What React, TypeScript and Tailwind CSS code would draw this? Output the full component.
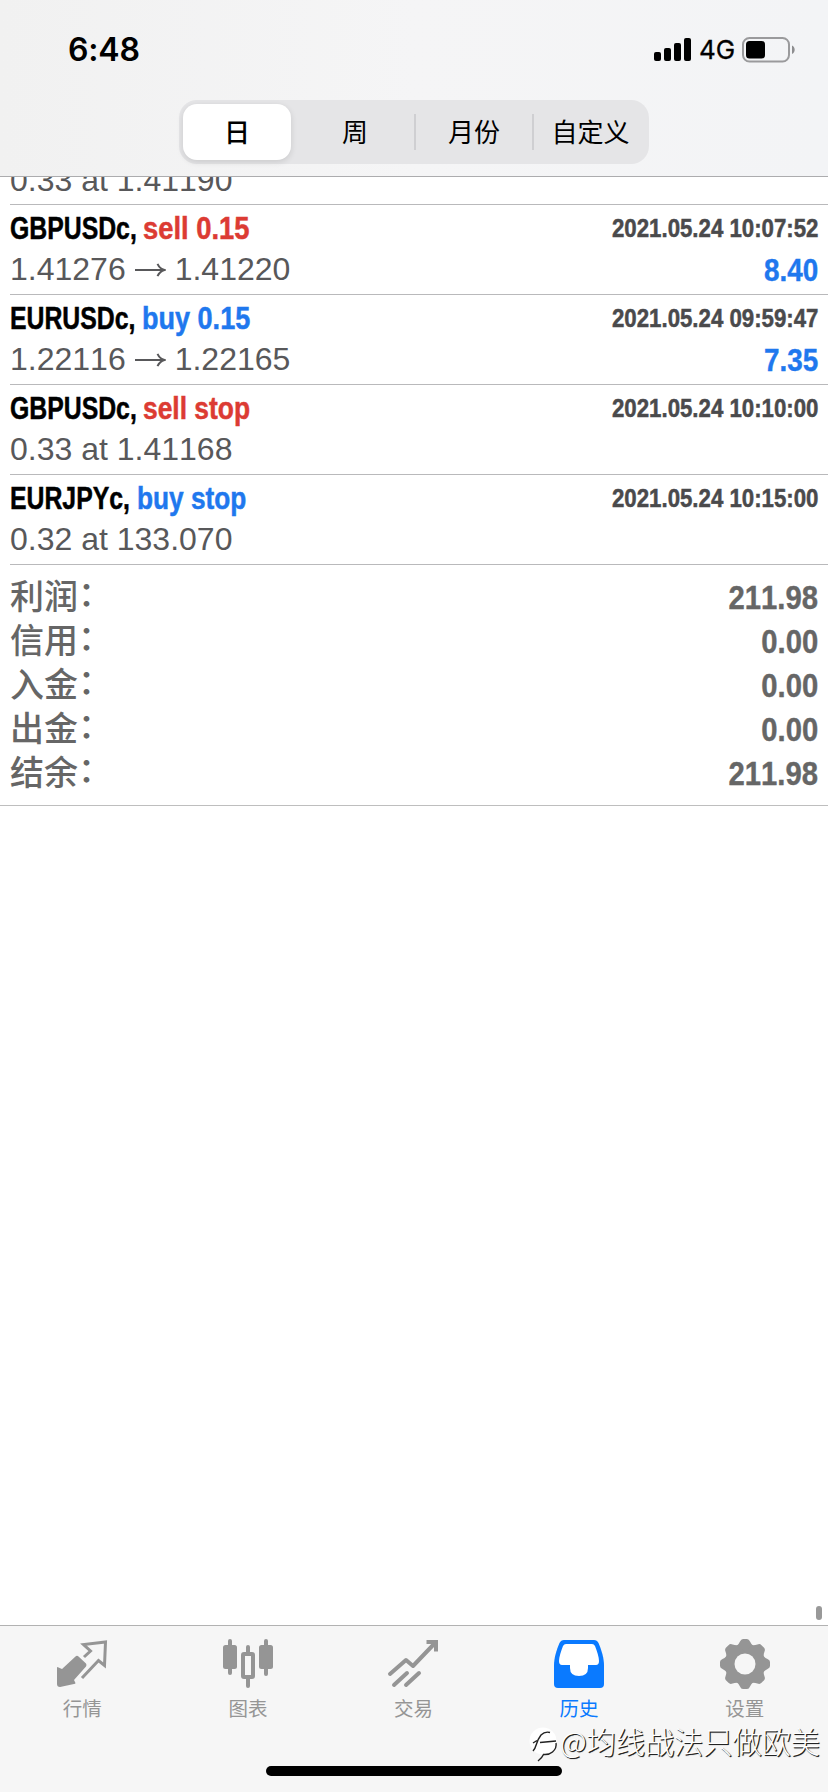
import type { ReactNode } from "react";

const SANS = "font-['Liberation_Sans','Noto_Sans_CJK_SC',sans-serif]";
const CJK = "font-['Noto_Sans_CJK_SC',sans-serif]";

type Deal = {
  symbol: string;
  symbolClass: string;
  action: string;
  actionClass: string;
  from: string;
  to?: string;
  time: string;
  profit?: string;
};

const deals: Deal[] = [
  { symbol: "GBPUSDc,", symbolClass: "scale-x-[0.775] w-[133px]", action: "sell 0.15", actionClass: "text-[#dc3b33] scale-x-[0.855]", from: "1.41276", to: "1.41220", time: "2021.05.24 10:07:52", profit: "8.40" },
  { symbol: "EURUSDc,", symbolClass: "scale-x-[0.775] w-[132px]", action: "buy 0.15", actionClass: "text-[#1f78ee] scale-x-[0.845]", from: "1.22116", to: "1.22165", time: "2021.05.24 09:59:47", profit: "7.35" },
  { symbol: "GBPUSDc,", symbolClass: "scale-x-[0.775] w-[133px]", action: "sell stop", actionClass: "text-[#dc3b33] scale-x-[0.825]", from: "0.33 at 1.41168", time: "2021.05.24 10:10:00" },
  { symbol: "EURJPYc,", symbolClass: "scale-x-[0.775] w-[127px]", action: "buy stop", actionClass: "text-[#1f78ee] scale-x-[0.82]", from: "0.32 at 133.070", time: "2021.05.24 10:15:00" },
];

const totals = [
  ["利润", "211.98"],
  ["信用", "0.00"],
  ["入金", "0.00"],
  ["出金", "0.00"],
  ["结余", "211.98"],
];

function LongArrow() {
  return (
    <svg width="32" height="16" viewBox="0 0 32 16" className="mr-[9px] ml-[8px] mt-[1px] shrink-0" fill="none" stroke="#58585a" strokeWidth="2">
      <path d="M1 8H30M23.5 1.8C25 5 27 7 30.5 8C27 9 25 11 23.5 14.2" />
    </svg>
  );
}

function DealRow({ d }: { d: Deal }) {
  return (
    <div className="ml-[10px] flex h-[90px] flex-col border-b border-[#b9b9bb] pr-[10px]">
      <div className="flex h-[46px] items-center justify-between text-[32px] font-bold leading-[46px] whitespace-nowrap [-webkit-text-stroke:0.5px_currentColor]">
        <div className="flex">
          <span className={`origin-left text-black ${d.symbolClass}`}>{d.symbol}</span>
          <span className={`origin-left ${d.actionClass}`}>{d.action}</span>
        </div>
        <span className="origin-right scale-x-[0.855] text-[26px] text-[#4a4a4c]">{d.time}</span>
      </div>
      <div className="flex h-[36px] items-center justify-between text-[32px] leading-[36px] text-[#58585a] whitespace-nowrap">
        <div className="flex items-center">
          <span>{d.from}</span>
          {d.to && <LongArrow />}
          {d.to && <span>{d.to}</span>}
        </div>
        {d.profit && <span className="mt-[2px] origin-right scale-x-[0.87] font-bold text-[#1f78ee] [-webkit-text-stroke:0.4px_currentColor]">{d.profit}</span>}
      </div>
    </div>
  );
}

function StatusBar() {
  return (
    <div className="flex h-[100px] items-center justify-between pr-[32px] pl-[68px] font-['Inter',sans-serif] text-black">
      <span className="text-[32px] font-semibold leading-none tracking-[-0.2px]">6:48</span>
      <div className="flex items-center">
        <svg width="38" height="24" viewBox="0 0 38 24">
          <rect x="0" y="14" width="7" height="9" rx="2" />
          <rect x="10" y="10" width="7" height="13" rx="2" />
          <rect x="20" y="5" width="7" height="18" rx="2" />
          <rect x="30" y="0" width="7" height="23" rx="2" />
        </svg>
        <span className="ml-[7px] w-[43px] text-[26px] leading-none [-webkit-text-stroke:0.3px_currentColor]">4G</span>
        <svg width="54" height="26" viewBox="0 0 54 26">
          <rect x="1" y="1" width="46" height="23.5" rx="6.5" fill="none" stroke="#9a9a9c" strokeWidth="2" />
          <rect x="4" y="4" width="19" height="17.5" rx="3.5" />
          <path d="M50 8.5C53.6 10 53.6 15.500 50 17Z" fill="#8d8d8f" />
        </svg>
      </div>
    </div>
  );
}

function Segments() {
  return (
    <div className={`ml-[179px] flex h-[64px] w-[470px] items-center rounded-[18px] bg-[#e5e5e7] text-[26px] text-black ${CJK}`}>
      <div className="flex h-full w-[117px] items-center pl-[4px]">
        <div className="flex h-[56px] w-[108px] items-center justify-center rounded-[14px] bg-white pb-[3px] font-medium shadow-[0_2px_6px_rgba(0,0,0,0.12)]">日</div>
      </div>
      <div className="w-[118px] pb-[3px] text-center">周</div>
      <div className="h-[36px] w-[118px] border-l-2 border-[#cfcfd2] text-center leading-[33px]">月份</div>
      <div className="h-[36px] w-[117px] border-l-2 border-[#cfcfd2] pr-[2px] text-center leading-[33px]">自定义</div>
    </div>
  );
}

function Tab({ label, active, children }: { label: string; active?: boolean; children: ReactNode }) {
  return (
    <div className={`flex flex-1 flex-col items-center pt-[12px] pr-[1px] ${active ? "text-[#0a7aff]" : "text-[#959595]"}`}>
      <svg width="52" height="52" viewBox="0 0 52 52">{children}</svg>
      <span className={`mt-[4px] text-[19.500px] leading-[28px] ${CJK}`}>{label}</span>
    </div>
  );
}

const GEAR_TEETH = [0, 45, 90, 135];

export default function App() {
  return (
    <div className={`relative flex h-[1792px] w-[828px] flex-col overflow-hidden bg-white [font-kerning:none] ${SANS}`}>
      <header className="h-[177px] shrink-0 border-b border-[#acacae] bg-linear-to-r from-[#f1f1f1] via-[#f5f5f6] to-[#f3f4f6]">
        <StatusBar />
        <Segments />
      </header>

      <main className="flex min-h-0 flex-1 flex-col overflow-hidden">
        <div className="ml-[10px] flex h-[28px] shrink-0 items-end overflow-hidden border-b border-[#b9b9bb] pb-[6px] text-[32px] leading-[36px] text-[#58585a]">0.33 at 1.41190</div>
        {deals.map((d) => (
          <DealRow key={d.time} d={d} />
        ))}
        <section className="flex h-[241px] shrink-0 flex-col border-b border-[#bebebe] px-[10px] pt-[10px] text-[#666]">
          {totals.map(([label, value]) => (
            <div key={label} className="flex h-[44px] items-center justify-between whitespace-nowrap">
              <div className={`flex pb-[4px] text-[34px] font-medium leading-[40px] ${CJK}`}>
                <span>{label}</span>
                <span className="-mt-[3px]">：</span>
              </div>
              <span className="origin-right scale-x-[0.86] text-[34px] font-bold leading-[44px] [-webkit-text-stroke:0.4px_currentColor]">{value}</span>
            </div>
          ))}
        </section>
        <div className="mt-auto mr-[6px] mb-[5px] h-[14px] w-[6px] shrink-0 self-end rounded-full bg-[#999]" />
      </main>

      <nav className="flex h-[167px] shrink-0 border-t border-[#b2b2b2] bg-[#f6f6f6]">
        <Tab label="行情">
          <path d="M19.500 18.500Q21 17 22.500 18.500L30 25.500Q31 27 30 28.500L18 42L19.500 45Q19.500 46 18 46L4 49Q1 49 1 46V30Q1 28.500 2.500 29.500L6 31Z" fill="currentColor" />
          <path d="M28 19L34.500 13L27.500 6.500L49.500 4L48.500 27.500L42.500 22.500L26 40" fill="none" stroke="currentColor" strokeWidth="3" />
        </Tab>
        <Tab label="图表">
          <g fill="currentColor">
            <rect x="1" y="7" width="14" height="24" rx="2.500" />
            <rect x="6" y="1" width="4" height="36" rx="2" />
            <rect x="37" y="7" width="14" height="24" rx="2.500" />
            <rect x="42" y="1" width="4" height="37" rx="2" />
            <rect x="24" y="7" width="4" height="9" rx="2" />
            <rect x="24" y="37" width="4" height="13" rx="2" />
          </g>
          <rect x="21" y="16" width="10" height="23" rx="1" fill="none" stroke="currentColor" strokeWidth="4" />
        </Tab>
        <Tab label="交易">
          <g fill="none" stroke="currentColor" strokeWidth="4" strokeLinecap="round" strokeLinejoin="round">
            <path d="M3 36L19 22L26 28L48 5" />
            <path d="M39.500 4H49V13.500" strokeLinecap="butt" strokeLinejoin="miter" />
            <path d="M7 47L20 35M19 47L32 35" />
          </g>
        </Tab>
        <Tab label="历史" active>
          <path fill="currentColor" d="M11 2H41Q44 2 45.500 5C49 13 51 21 51 27V46Q51 50 47 50H5Q1 50 1 46V27C1 21 3 13 6.500 5Q8 2 11 2Z" />
          <path fill="#fff" d="M13 6H39Q41 6 42 8C44 13 46 19 46 23Q46 27 43 27H35V30Q35 38 26 38Q17 38 17 30V27H9Q6 27 6 23C6 19 8 13 10 8Q11 6 13 6Z" />
        </Tab>
        <Tab label="设置">
          <g fill="currentColor">
            <circle cx="26" cy="26" r="20" />
            {GEAR_TEETH.map((a) => (
              <path key={a} transform={`rotate(${a} 26 26)`} d="M17.500 8Q20 6 21 3.500Q22 1 24 1H28Q30 1 31 3.500Q32 6 34.500 8V44Q32 46 31 48.500Q30 51 28 51H24Q22 51 21 48.500Q20 46 17.500 44Z" />
            ))}
          </g>
          <circle cx="26" cy="26" r="10.500" fill="#f6f6f6" />
        </Tab>
      </nav>

      <div className="absolute top-[1766px] left-[266px] h-[10px] w-[296px] rounded-full bg-black" />
      <div className="absolute top-[1717px] left-[529px] flex items-center text-white">
        <svg width="31" height="36" viewBox="0 0 31 36" className="mt-[10px]">
          <circle cx="14" cy="14" r="13.500" fill="#fff" />
          <path d="M21 5.500Q16 4 12 8Q9 12 7.500 17T4 24M4 16L8 13.500M11 15.500L27 14M27 16Q28 21 23.500 25Q20 28 14.500 27.500Q13 31 9 34" fill="none" stroke="#222" strokeWidth="1.400" />
        </svg>
        <span className={`text-[29.200px] font-light leading-[44px] whitespace-nowrap [text-shadow:1px_1px_0_#222,1px_1px_1px_#444] ${CJK}`}>@均线战法只做欧美</span>
      </div>
    </div>
  );
}
